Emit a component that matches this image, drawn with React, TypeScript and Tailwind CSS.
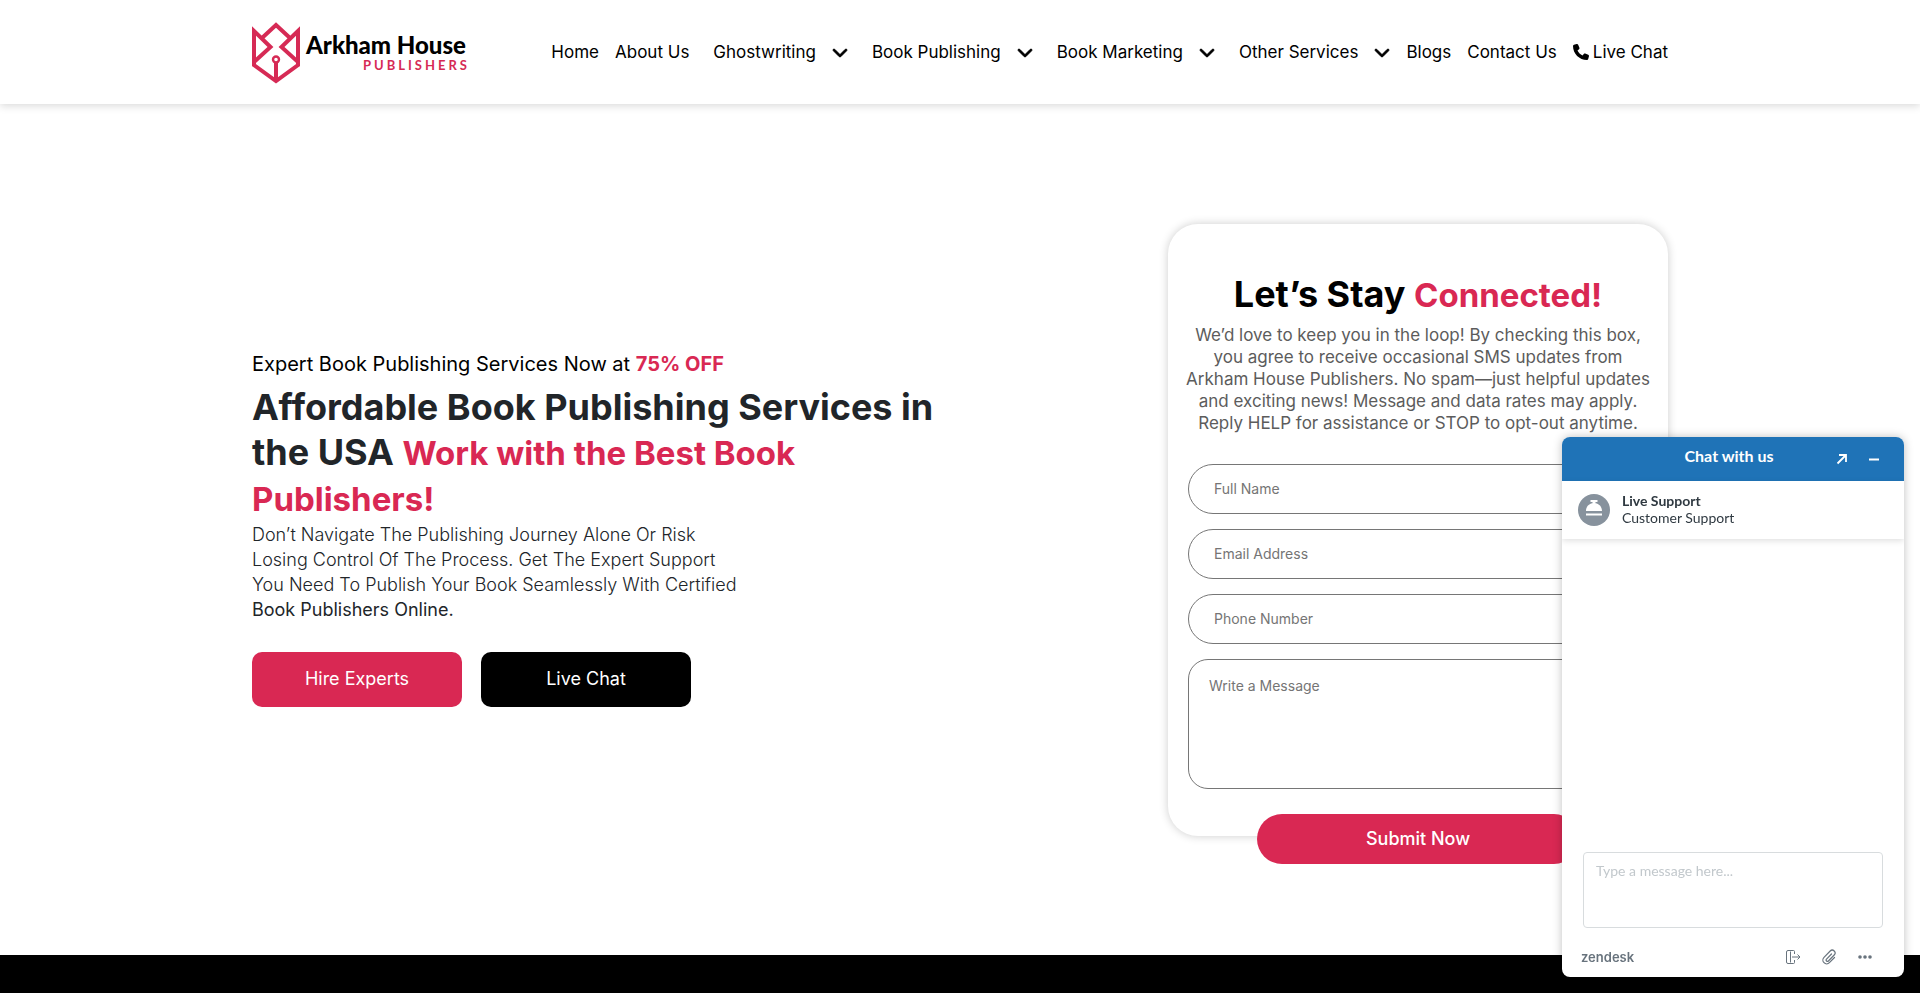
import { FaChevronDown, FaPhone } from "react-icons/fa6";

const menus = ["Ghostwriting", "Book Publishing", "Book Marketing", "Other Services"];

const fields = [
  { id: "full-name", label: "Full Name", type: "text" },
  { id: "email", label: "Email Address", type: "email" },
  { id: "phone", label: "Phone Number", type: "tel" },
];

function Logo() {
  return (
    <a href="#" aria-label="Arkham House Publishers" className="flex items-center gap-1.5 pt-0.5">
      <svg viewBox="0 0 48 62" className="h-[62px] w-12" fill="none">
        <g stroke="#d62a55" strokeWidth="4">
          <path d="M2 9 L18.500 25 L2 40 Z" />
          <path d="M46 9 L29.500 25 L46 40 Z" />
          <path d="M10 16 L24 3 L38 16" />
          <path d="M2 36 V43 L24 59 L46 43 V36" />
          <path d="M24 41 V58" />
          <circle cx="24" cy="37.500" r="3" strokeWidth="2.400" fill="#fff" />
        </g>
      </svg>
      <span className="flex flex-col items-end font-[Lato,sans-serif] font-black">
        <span className="text-2xl leading-6 text-black">Arkham House</span>
        <span className="-mr-1 text-[13px] leading-4 font-bold tracking-[3px] text-[#d62a55]">PUBLISHERS</span>
      </span>
    </a>
  );
}

function Header() {
  return (
    <header className="relative z-10 bg-white shadow-[0_2px_8px_rgba(0,0,0,0.15)]">
      <div className="mx-auto flex h-[104px] max-w-[1416px] items-center justify-between">
        <Logo />
        <nav className="flex items-center text-[17px] leading-6 text-black">
          <a href="#" className="mr-4">Home</a>
          <a href="#" className="mr-6">About Us</a>
          {menus.map((m) => (
            <button key={m} type="button" className="mr-6 flex items-center gap-4 last-of-type:mr-4">
              {m}
              <FaChevronDown className="size-4 overflow-visible stroke-current stroke-[28px]" />
            </button>
          ))}
          <a href="#" className="mr-4">Blogs</a>
          <a href="#" className="mr-4">Contact Us</a>
          <a href="#" className="flex items-center gap-1">
            <FaPhone className="size-4" />
            Live Chat
          </a>
        </nav>
      </div>
    </header>
  );
}

function Intro() {
  return (
    <div className="max-w-[708px] pb-1">
      <p className="text-xl leading-[30px] text-black">
        Expert Book Publishing Services Now at <strong className="font-bold text-[#d92853]">75% OFF</strong>
      </p>
      <h1 className="mt-1.5 text-4xl leading-[45px] font-bold text-[#212529]">
        Affordable Book Publishing Services in the USA{" "}
        <span className="text-[33px] text-[#d92853]">Work with the Best Book Publishers!</span>
      </h1>
      <p className="max-w-[496px] text-lg leading-[25px] font-light text-[#212529]">
        Don’t Navigate The Publishing Journey Alone Or Risk Losing Control Of The Process. Get The Expert Support You
        Need To Publish Your Book Seamlessly With Certified <b className="font-normal">Book Publishers Online.</b>
      </p>
      <div className="mt-[30px] flex gap-[19px] text-lg text-white">
        <button type="button" className="h-[55px] w-[210px] rounded-[10px] bg-[#d92853]">Hire Experts</button>
        <button type="button" className="h-[55px] w-[210px] rounded-[10px] bg-black">Live Chat</button>
      </div>
    </div>
  );
}

function ContactForm() {
  return (
    <form className="w-[500px] rounded-[30px] bg-white px-5 pt-12 shadow-[0_0_10px_rgba(0,0,0,0.2)]">
      <h2 className="text-center text-4xl leading-[45px] font-bold text-black">
        Let’s Stay <span className="text-[33px] text-[#d92853]">Connected!</span>
      </h2>
      <p className="-mx-1.5 mt-1.5 text-center text-[17px] leading-[22px] text-[#5c5c5c]">
        We’d love to keep you in the loop! By checking this box, you agree to receive occasional SMS updates from Arkham
        House Publishers. No spam—just helpful updates and exciting news! Message and data rates may apply. Reply HELP
        for assistance or STOP to opt-out anytime.
      </p>
      <div className="mt-[30px] flex flex-col gap-[15px] text-sm">
        {fields.map((f) => (
          <input
            key={f.id}
            id={f.id}
            type={f.type}
            aria-label={f.label}
            placeholder={f.label}
            className="h-[50px] rounded-full border border-[#767676] px-[25px] placeholder:text-[#757575]"
          />
        ))}
        <textarea
          aria-label="Write a Message"
          placeholder="Write a Message"
          className="h-[130px] resize-none rounded-[20px] border border-[#767676] px-5 py-4 placeholder:text-[#757575]"
        />
      </div>
      <button
        type="submit"
        className="mx-auto mt-[25px] -mb-7 block h-[50px] w-[70%] rounded-full bg-[#d92853] text-lg font-medium text-white"
      >
        Submit Now
      </button>
    </form>
  );
}

function ChatWidget() {
  return (
    <aside
      aria-label="Chat"
      className="fixed right-4 bottom-4 z-20 flex h-[540px] w-[342px] flex-col overflow-hidden rounded-lg bg-white font-[Lato,sans-serif] shadow-[0_0_10px_rgba(0,0,0,0.25)]"
    >
      <div className="grid h-11 shrink-0 grid-cols-[1fr_auto_1fr] items-center bg-[#1f73b7] text-white">
        <span />
        <h2 className="pr-2 pb-1.5 text-base leading-5 font-bold">Chat with us</h2>
        <div className="flex justify-end gap-5 pr-6">
          <button type="button" aria-label="Open in new window">
            <svg viewBox="0 0 12 12" className="size-3" fill="none" stroke="currentColor" strokeWidth="1.800">
              <path d="M1.500 10.500 L10 2 M3 2 H10 V9" />
            </svg>
          </button>
          <button type="button" aria-label="Minimize">
            <svg viewBox="0 0 12 12" className="size-3" fill="none" stroke="currentColor" strokeWidth="1.800">
              <path d="M1 6.500 H11" />
            </svg>
          </button>
        </div>
      </div>
      <div className="flex h-[58px] shrink-0 items-center gap-3 px-4 shadow-[0_2px_6px_rgba(0,0,0,0.12)]">
        <svg viewBox="0 0 32 32" className="size-8">
          <circle cx="16" cy="16" r="16" fill="#87929d" />
          <g fill="#fff">
            <path d="M12.500 6 H19.500 V8 H17.500 V9.300 C21.500 10 24 13 24 17 H8 C8 13 10.500 10 14.500 9.300 V8 H12.500 Z" />
            <rect x="8" y="19.500" width="16" height="2" />
          </g>
        </svg>
        <div className="pb-0.5 text-sm leading-[17px] text-[#2f3941]">
          <p className="font-bold">Live Support</p>
          <p>Customer Support</p>
        </div>
      </div>
      <div className="flex-1" />
      <div className="px-[21px]">
        <textarea
          aria-label="Type a message"
          placeholder="Type a message here..."
          className="block h-[76px] w-full resize-none rounded-sm border border-[#d8dcde] px-3 py-2 text-sm placeholder:text-[#c2c8cc]"
        />
      </div>
      <div className="flex h-[49px] shrink-0 items-center justify-between pt-2 pr-[31px] pl-[19px] text-[#68737d]">
        <a href="#" className="font-[Inter,sans-serif] text-[13px] leading-5 font-semibold">zendesk</a>
        <div className="flex gap-5">
          <button type="button" aria-label="End chat">
            <svg viewBox="0 0 16 16" className="size-4" fill="none" stroke="currentColor">
              <path d="M5.500 2.500 V13.500 M9.500 5 V2.500 Q9.500 1.500 8.500 1.500 H3 Q1.500 1.500 1.500 3 V13 Q1.500 14.500 3 14.500 H8.500 Q9.500 14.500 9.500 13.500 V11 M7 8 H15 M12.500 5.500 L15 8 L12.500 10.500" />
            </svg>
          </button>
          <button type="button" aria-label="Attach file">
            <svg viewBox="0 0 16 16" className="size-4" fill="none" stroke="currentColor" strokeWidth="1.200" strokeLinecap="round">
              <path d="M10.500 5 L5.500 10.200 A1.300 1.300 0 0 0 7.400 12 L13.200 6 A2.800 2.800 0 0 0 9.200 2 L3 8.300 A3.800 3.800 0 0 0 8.400 13.700 L13.500 8.500" />
            </svg>
          </button>
          <button type="button" aria-label="More options">
            <svg viewBox="0 0 16 16" className="size-4" fill="currentColor">
              <circle cx="3" cy="8" r="1.800" />
              <circle cx="8" cy="8" r="1.800" />
              <circle cx="13" cy="8" r="1.800" />
            </svg>
          </button>
        </div>
      </div>
    </aside>
  );
}

export default function App() {
  return (
    <div className="flex min-h-screen flex-col bg-white font-[Inter,sans-serif]">
      <Header />
      <main className="mx-auto flex w-full max-w-[1416px] flex-1 items-center justify-between">
        <Intro />
        <ContactForm />
      </main>
      <footer className="h-[38px] bg-black" />
      <ChatWidget />
    </div>
  );
}
